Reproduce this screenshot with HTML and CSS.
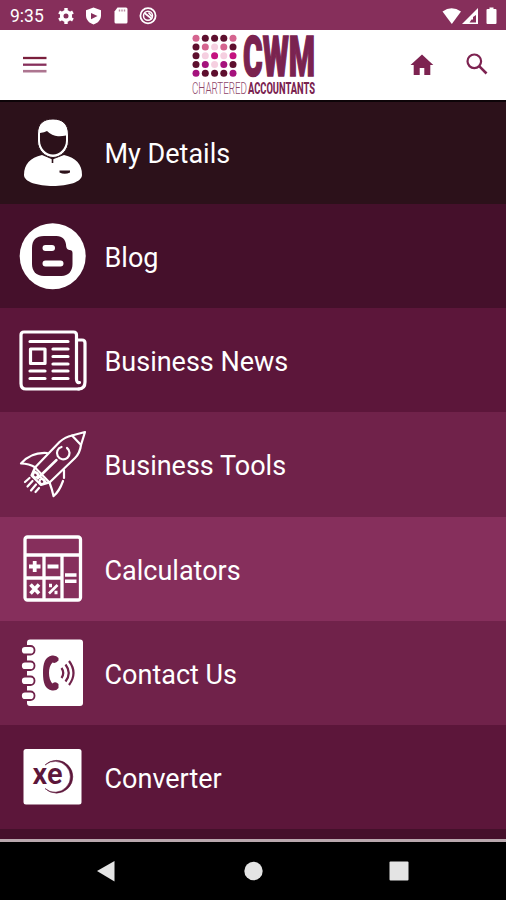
FILE: index.html
```html
<!DOCTYPE html>
<html lang="en">

<head>
    <meta charset="UTF-8">
    <meta name="viewport" content="width=device-width, initial-scale=1.0">
    <link rel="stylesheet" href="styles.css">
    <title>CWM Chartered Accountants</title>
</head>

<body>
    <div class="phone">
        <div class="status">
            <span class="time">9:35</span>
            <svg class="status-left" width="102" height="20" viewBox="0 0 102 20" fill="#fff">
                <circle cx="10" cy="10" r="4.300" fill="none" stroke="#fff" stroke-width="3.600"/>
                <path d="M8.300 2h3.400v4H8.300zM8.300 14h3.400v4H8.300z"/>
                <path d="M8.300 2h3.400v4H8.300zM8.300 14h3.400v4H8.300z" transform="rotate(60 10 10)"/>
                <path d="M8.300 2h3.400v4H8.300zM8.300 14h3.400v4H8.300z" transform="rotate(120 10 10)"/>
                <path d="M37.500 1.500l7.500 2.800v5.200c0 4.300-3 7.500-7.500 9-4.500-1.500-7.500-4.700-7.500-9V4.300z"/>
                <path d="M35 7l6.500 3-6.500 3.200z" fill="#862f5b"/>
                <path d="M63 2.500h8.500q1.500 0 1.500 1.500v13q0 1.500-1.500 1.500h-10q-1.500 0-1.500-1.500V6.500z" transform="translate(-1.500 -1)"/>
                <path d="M63.500 3.500v2M66 3.500v2M68.500 3.500v2" stroke="#b98aa2" stroke-width="1.400"/>
                <circle cx="92" cy="9.700" r="7.600" fill="none" stroke="#fff" stroke-width="1.800"/>
                <circle cx="92" cy="9.700" r="4.500" fill="none" stroke="#fff" stroke-width="1.500"/>
                <path d="M88.500 7l7.500 6M92.500 6.500l3.500 4" stroke="#fff" stroke-width="1.700"/>
            </svg>
            <svg class="status-right" width="58" height="20" viewBox="0 0 58 20" fill="#fff">
                <path d="M0.500 5.500Q9.500-1 19 5.500L9.800 18z"/>
                <path d="M36 2v16H20z"/>
                <path d="M34 9v7.500h-6.500l2-3h1.500v-2.500z" fill="#862f5b"/>
                <path d="M47.500 1.500h4v1.500h2q1 0 1 1v13q0 1-1 1h-8q-1 0-1-1V4q0-1 1-1h2z"/>
            </svg>
        </div>

        <div class="header">
            <svg class="menu" width="24" height="18" viewBox="0 0 24 18">
                <path d="M0 2h23.500" stroke="#7a1f3c" stroke-width="2.300"/>
                <path d="M0 8.700h23.500" stroke="#862f5b" stroke-width="2.300"/>
                <path d="M0 15.200h23.500" stroke="#ad7590" stroke-width="2.600"/>
            </svg>
            <svg class="logo" width="130" height="64" viewBox="0 0 130 64">
                <g fill="#5e0f2e">
                    <circle cx="15.300" cy="6.300" r="3.500"/><circle cx="24.600" cy="6.300" r="3.500"/><circle cx="33.800" cy="6.300" r="3.500"/>
                    <circle cx="6" cy="15" r="3.500"/><circle cx="43" cy="15" r="3.500"/>
                    <circle cx="6" cy="23.700" r="3.500"/>
                    <circle cx="6" cy="32.400" r="3.500"/><circle cx="43" cy="32.400" r="3.500"/>
                    <circle cx="15.300" cy="41.200" r="3.500"/><circle cx="24.600" cy="41.200" r="3.500"/><circle cx="33.800" cy="41.200" r="3.500"/>
                </g>
                <g fill="#d5648f">
                    <circle cx="6" cy="6.300" r="3.500"/><circle cx="43" cy="6.300" r="3.500"/>
                    <circle cx="15.300" cy="15" r="3.500"/><circle cx="33.800" cy="15" r="3.500"/>
                </g>
                <g fill="#f5cfe0">
                    <circle cx="24.600" cy="15" r="3.500"/><circle cx="15.300" cy="23.700" r="3.500"/>
                    <circle cx="33.800" cy="23.700" r="3.500"/><circle cx="24.600" cy="32.400" r="3.500"/>
                </g>
                <g fill="#a5127d">
                    <circle cx="15.300" cy="32.400" r="3.500"/><circle cx="33.800" cy="32.400" r="3.500"/>
                    <circle cx="6" cy="41.200" r="3.500"/><circle cx="43" cy="41.200" r="3.500"/>
                </g>
                <g fill="#c4127f">
                    <circle cx="24.600" cy="23.700" r="3.500"/><circle cx="43" cy="23.700" r="3.500"/>
                </g>
                <text class="logo-name" x="53" y="43.500" textLength="72" lengthAdjust="spacingAndGlyphs">CWM</text>
                <text class="logo-thin" x="2" y="61.500" textLength="55" lengthAdjust="spacingAndGlyphs">CHARTERED</text>
                <text class="logo-bold" x="58" y="61.500" textLength="67" lengthAdjust="spacingAndGlyphs">ACCOUNTANTS</text>
            </svg>
            <svg class="home" width="24" height="22" viewBox="0 0 24 22" fill="#7d2351">
                <path d="M12 0.500L23.300 11h-3v10h-6v-7h-4.600v7h-6V11H0.500z"/>
            </svg>
            <svg class="search" width="22" height="22" viewBox="0 0 22 22" fill="none" stroke="#7d2351">
                <circle cx="8.300" cy="8.300" r="6.800" stroke-width="2.200"/>
                <path d="M13.200 13.200l7.300 7.300" stroke-width="2.600"/>
            </svg>
        </div>

        <ul class="list">
            <li class="shade1">
                <svg class="icon" viewBox="0 0 70 70">
                    <path d="M6 57c0-11 6-17 18-20l10.500 4.500L46 37c12 3 18 9 18 20 0 7-14 11-29 11S6 64 6 57z" fill="#fff"/>
                    <path d="M34.500 38v7" stroke="#2c111a" stroke-width="1.600"/>
                    <path d="M19.500 16C19.500 5 26 1 35 1s15.500 4.500 15.500 16v6c0 9-7.500 16.500-15.500 16.500S19.500 32 19.500 23z" fill="#fff" stroke="#2c111a" stroke-width="1"/>
                    <path d="M22 15q4.500-.5 7-2 5 5 11 5.200 4 .2 8-.7v5c0 8-6.500 14-13 14s-13-6-13-14z" fill="#2c111a"/>
                    <path d="M41.500 52.500h10.500v2q-5.200 2.500-10.500 0z" fill="#2c111a"/>
                </svg>
                <span>My Details</span>
            </li>
            <li class="shade2">
                <svg class="icon" viewBox="0 0 70 70">
                    <circle cx="34.700" cy="35.200" r="33" fill="#fff"/>
                    <path d="M26 15h12.500c6 0 9 4 9.500 8.500.3 3.800 1 5 3.500 5.500 2 .3 3 1 3 3V43c0 7-4 12-11 12H26c-8 0-12-5-12-12V27c0-8 4-12 12-12z" fill="#45102b"/>
                    <path d="M27.500 27h6.500M27.500 42.500h15" stroke="#fff" stroke-width="6" stroke-linecap="round"/>
                </svg>
                <span>Blog</span>
            </li>
            <li class="shade3">
                <svg class="icon" viewBox="0 0 70 70" fill="none" stroke="#fff" stroke-width="3.200" stroke-linecap="round" stroke-linejoin="round">
                    <path d="M61 64H8q-5 0-5-5.500V10q0-3 3-3H55.500q3 0 3 3v44q0 4 3 3.500"/>
                    <path d="M59 15h5q3 0 3 3V57q0 7-6.500 7"/>
                    <rect x="12.500" y="24" width="14.500" height="14.500"/>
                    <path d="M12 16.500h38M35 24h15M35 31.500h15M35 39h15M12 46h15M35 46h15M12 53.500h15M35 53.500h15"/>
                </svg>
                <span>Business News</span>
            </li>
            <li class="shade4">
                <svg class="icon" viewBox="0 0 70 70" fill="none" stroke="#fff" stroke-width="2.200" stroke-linecap="round" stroke-linejoin="round">
                    <path d="M67 3L54 6.500Q47 8 41.500 13L17 38.500 31.500 53.500 57 29Q62 24 63 16z"/>
                    <path d="M54 6.500l9 9.500"/>
                    <path d="M43.500 18a6.300 6.300 0 1 0 5.500 1"/>
                    <path d="M29 24Q13 23 3 34.500q8 0 14.500 4"/>
                    <path d="M46 41v8M45 52Q41 63 35.500 67 34 60 31.500 53.500"/>
                    <path d="M38.500 31L19.500 49.500" stroke-width="2.500"/>
                    <path d="M17 38.500l-3.500 8 9.500 9.500 8.500-2.500M17 42.500l11 11"/>
                    <circle cx="17.500" cy="46" r="2.500"/>
                    <circle cx="24" cy="52.500" r="2.500"/>
                    <path d="M11.500 49l-4.500 4M14.500 52L9.500 57.500M18 55.500l-5 6M21 59L17.500 63"/>
                </svg>
                <span>Business Tools</span>
            </li>
            <li class="shade5">
                <svg class="icon" viewBox="0 0 70 70" fill="none" stroke="#fff" stroke-width="3.300">
                    <rect x="7" y="3" width="55.500" height="63" rx="2.500"/>
                    <path d="M7 21h55.500M7 44h37M26 21v45M44 21v45"/>
                    <path d="M11 32.500h11.500M16.700 27v11M29.500 32.500h11" stroke-width="3.800"/>
                    <path d="M12.500 50.500l8.500 9M21 50.500l-8.500 9" stroke-width="3.600"/>
                    <path d="M39.500 51L31 59.500" stroke-width="2.600"/>
                    <path d="M31 51.500h3M36.500 58.500h3" stroke-width="3.400"/>
                    <path d="M47 41h11.500M47 47.300h11.500" stroke-width="3.600"/>
                </svg>
                <span>Calculators</span>
            </li>
            <li class="shade4">
                <svg class="icon" viewBox="0 0 70 70">
                    <rect x="9" y="1.500" width="56" height="66.500" rx="3" fill="#fff"/>
                    <g fill="#fff" stroke="#70224a" stroke-width="1.800">
                        <rect x="3" y="8" width="13.500" height="8.500" rx="4"/>
                        <rect x="3" y="23.500" width="13.500" height="8.500" rx="4"/>
                        <rect x="3" y="38.500" width="13.500" height="8.500" rx="4"/>
                        <rect x="3" y="53.500" width="13.500" height="8.500" rx="4"/>
                    </g>
                    <path d="M40.500 22.500V20q-2-3-6.500-2.500C27 19 25 25 25 35s2 16 9 17.500q4.500.5 6.500-2.500V46q-3-3-6-.5Q31 42 31 35t3.500-10.500q3 1.500 6-2z" fill="#70224a"/>
                    <path d="M43.500 30q3.500 5 0 10M47.500 26.500q6.500 8.500 0 17M51 23q9 12 0 24" fill="none" stroke="#70224a" stroke-width="2.200"/>
                </svg>
                <span>Contact Us</span>
            </li>
            <li class="shade3">
                <svg class="icon" viewBox="0 0 70 70">
                    <rect x="5.500" y="7" width="58" height="55.500" rx="2.500" fill="#fff"/>
                    <path d="M27 23A16.400 16.400 0 1 1 27 46.500 15.400 15.400 0 1 0 27 23z" fill="#5c163a" stroke="#5c163a" stroke-width=".5"/>
                    <text class="xe" x="14.500" y="42" textLength="30" lengthAdjust="spacingAndGlyphs">xe</text>
                </svg>
                <span>Converter</span>
            </li>
            <li class="shade2 last"></li>
        </ul>

        <div class="navbar">
            <svg width="20" height="22" viewBox="0 0 20 22"><path d="M1 11L18.500 1v20.500z"/></svg>
            <svg width="20" height="22" viewBox="0 0 20 22"><circle cx="10.500" cy="11" r="9.200"/></svg>
            <svg width="20" height="22" viewBox="0 0 20 22"><rect x="0.500" y="1.500" width="19" height="19" rx="1"/></svg>
        </div>
    </div>
</body>

</html>
```

FILE: styles.css
```css
* {
    margin: 0;
    padding: 0;
    box-sizing: border-box;
}

body {
    font-family: Roboto, "Liberation Sans", sans-serif;
    background-color: #000;
}

svg {
    display: block;
    flex: none;
}

.phone {
    width: 506px;
    height: 900px;
    display: flex;
    flex-direction: column;
    overflow: hidden;
}

.status {
    height: 30px;
    flex: none;
    display: flex;
    align-items: center;
    padding: 1px 6px 0 10px;
    background-color: #862f5b;
}

.time {
    width: 46px;
    font-size: 17.5px;
    color: #fff;
}

.status-right {
    margin-left: auto;
}

.header {
    height: 70px;
    flex: none;
    display: flex;
    align-items: center;
    padding: 0 18px 0 23px;
    background-color: #fff;
}

.menu {
    margin-top: -1px;
}

.logo {
    margin-left: 143px;
    margin-top: -2px;
}

.logo-name {
    font-size: 55px;
    font-weight: 900;
    fill: #7a2350;
    stroke: #7a2350;
    stroke-width: 1.6px;
}

.logo-thin,
.logo-bold {
    font-size: 16px;
    font-weight: 300;
    fill: #8d4568;
}

.logo-bold {
    font-weight: 800;
    fill: #7a2350;
}

.home {
    margin-left: auto;
    margin-top: -1px;
}

.search {
    margin-left: 32px;
    margin-top: -2px;
}

.list {
    height: 739px;
    flex: none;
    list-style: none;
    overflow: hidden;
    border-top: 2px solid #0d0408;
}

.list li {
    height: 104.14px;
    display: flex;
    align-items: center;
    padding-left: 18px;
    font-size: 27px;
    color: #fff;
}

.list li:first-child {
    height: 102.14px;
}

.list span {
    padding-top: 4px;
}

.list li:first-child span {
    padding-top: 2px;
}

.icon {
    width: 70px;
    height: 70px;
    margin-right: 16.5px;
}

.xe {
    font-size: 29px;
    font-weight: 600;
    fill: #5c163a;
}

.shade1 {
    background-color: #2c111a;
}

.shade2 {
    background-color: #45102b;
}

.shade3 {
    background-color: #5c163a;
}

.shade4 {
    background-color: #70224a;
}

.shade5 {
    background-color: #862f5c;
}

.navbar {
    flex: 1;
    display: flex;
    justify-content: space-between;
    align-items: center;
    padding: 0 97px 1px 96px;
    border-top: 3px solid #b9a8ae;
    background-color: #000;
    fill: #e4e4e4;
}
```
